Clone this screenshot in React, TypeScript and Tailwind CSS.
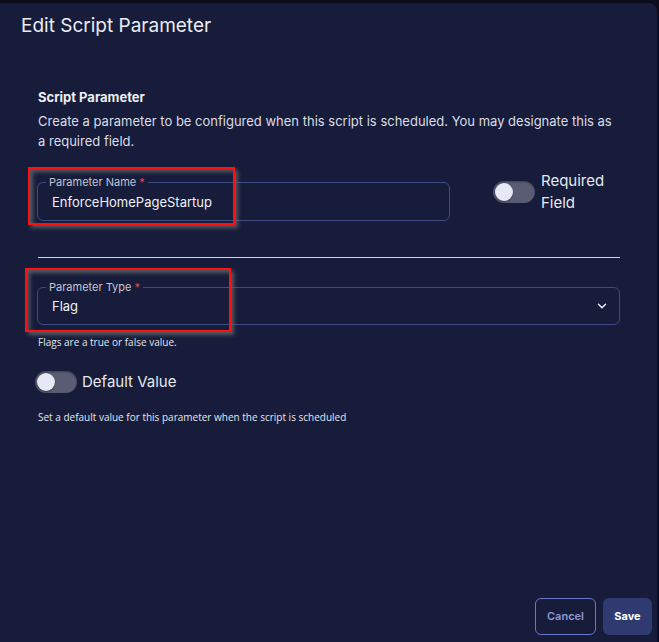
import { ChevronDown } from "lucide-react";

const Toggle = () => (
  <div className="flex h-[22px] w-[42px] items-center rounded-full bg-[#5a5c73] px-[2px] shadow-[inset_0_1px_2px_rgba(0,0,0,0.35)]">
    <div className="h-[18px] w-[18px] rounded-full bg-[#e6e8f5] shadow-[0_1px_2px_rgba(0,0,0,0.4)]" />
  </div>
);

const FieldLabel = ({ text }: { text: string }) => (
  <span className="absolute -top-[8px] left-[8px] bg-[#161c3a] px-[3px] text-[11px] leading-[14px] text-[#c3c6d4]">
    {text} <span className="text-[#e0454d]">*</span>
  </span>
);

const Highlight = ({ className }: { className: string }) => (
  <div
    className={`pointer-events-none absolute border-2 border-[#ff1010] shadow-[3px_3px_4px_rgba(110,110,110,0.75),inset_3px_3px_4px_rgba(110,110,110,0.75)] ${className}`}
  />
);

export default function App() {
  return (
    <div className="h-[642px] w-[659px] overflow-hidden bg-[#0b0e1a] pt-[3px] font-['Inter','Liberation_Sans',sans-serif]">
      <div className="relative flex h-[639px] w-[657px] flex-col rounded-tr-lg bg-[#161c3a]">
        <h1 className="pl-[21px] pt-[9px] text-[19px] leading-[28px] text-[#ebecf1]">Edit Script Parameter</h1>

        <div className="w-[582px] pl-[38px] box-content">
          <h2 className="mt-[47px] text-[13px] font-bold leading-[20px] text-[#eceef3]">Script Parameter</h2>
          <p className="mt-[4px] text-[13px] leading-[20px] text-[#dadce6]">
            Create a parameter to be configured when this script is scheduled. You may designate this as a required
            field.
          </p>

          <div className="mt-[19px] flex items-start">
            <div className="relative mt-[12px] flex h-[39px] w-[413px] -ml-px items-center rounded-md border border-[#3d4a86] pl-[14px]">
              <FieldLabel text="Parameter Name" />
              <span className="pt-[2px] text-[13px] text-[#eef0f6]">EnforceHomePageStartup</span>
            </div>
            <div className="ml-[43px] mt-[11px]">
              <Toggle />
            </div>
            <div className="ml-[6px] text-[15px] leading-[22px] text-[#e6e8f0]">
              Required
              <br />
              Field
            </div>
          </div>

          <div className="mt-[36px] h-px w-full bg-[#d2d6e4]" />

          <div className="relative mt-[29px] flex h-[38px] -ml-px w-[583px] items-center justify-between rounded-md border border-[#3d4a86] pl-[14px] pr-[10px]">
            <FieldLabel text="Parameter Type" />
            <span className="pt-[2px] text-[13px] text-[#eef0f6]">Flag</span>
            <ChevronDown size={14} strokeWidth={2.5} className="text-[#eef0f6]" />
          </div>

          <p className="mt-[10px] font-['Open_Sans',sans-serif] text-[10px] leading-[14px] text-[#e4e6ee]">
            Flags are a true or false value.
          </p>

          <div className="mt-[22px] -ml-[3px] flex items-center gap-[5px]">
            <Toggle />
            <span className="text-[15px] leading-[22px] text-[#e6e8f0]">Default Value</span>
          </div>

          <p className="mt-[17px] font-['Open_Sans',sans-serif] text-[10px] leading-[14px] text-[#e4e6ee]">
            Set a default value for this parameter when the script is scheduled
          </p>
        </div>

        <div className="mt-auto flex justify-end gap-[7px] pb-[7px] pr-[5px]">
          <button className="h-[37px] w-[61px] rounded-md border border-[#6877c8] text-[11px] font-semibold text-[#8e99d0]">
            Cancel
          </button>
          <button className="h-[37px] w-[49px] rounded-md bg-[#2f3b70] text-[11px] font-bold text-white">Save</button>
        </div>

        <Highlight className="left-[28px] top-[164px] h-[58px] w-[207px]" />
        <Highlight className="left-[25px] top-[265px] h-[64px] w-[206px]" />
      </div>
    </div>
  );
}
